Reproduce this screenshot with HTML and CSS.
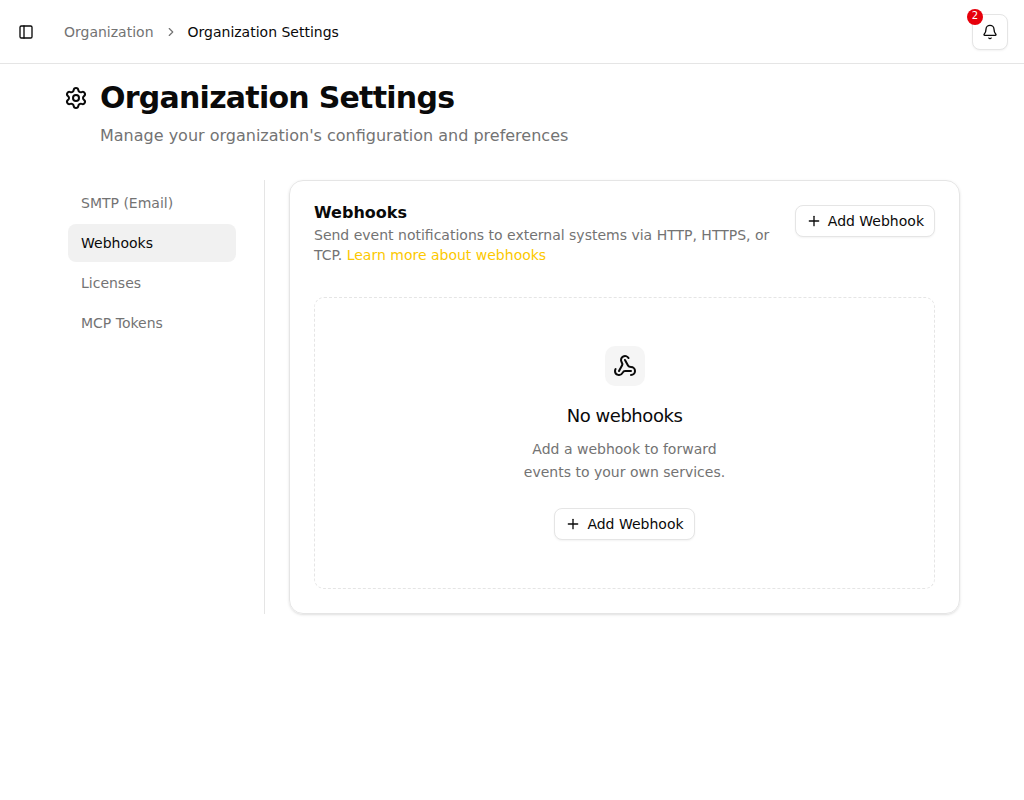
FILE: index.html
```html
<!DOCTYPE html>
<html lang="en">
<head>
<meta charset="utf-8">
<title>Organization Settings</title>
<link rel="stylesheet" href="styles.css">
</head>
<body>
<header class="topbar">
  <button class="sidebar-toggle" aria-label="Toggle sidebar">
    <svg class="icon" viewBox="0 0 24 24"><rect width="18" height="18" x="3" y="3" rx="2"/><path d="M9 3v18"/></svg>
  </button>
  <nav class="breadcrumb">
    <a class="crumb">Organization</a>
    <svg class="icon crumb-sep" viewBox="0 0 24 24"><path d="m9 18 6-6-6-6"/></svg>
    <span class="crumb-current">Organization Settings</span>
  </nav>
  <button class="bell" aria-label="Notifications">
    <svg class="icon" viewBox="0 0 24 24"><path d="M10.268 21a2 2 0 0 0 3.464 0"/><path d="M3.262 15.326A1 1 0 0 0 4 17h16a1 1 0 0 0 .74-1.673C19.41 13.956 18 12.499 18 8A6 6 0 0 0 6 8c0 4.499-1.411 5.956-2.738 7.326"/></svg>
    <span class="badge">2</span>
  </button>
</header>
<main class="page">
  <div class="page-title">
    <svg class="icon icon-lg" viewBox="0 0 24 24"><path d="M9.671 4.136a2.34 2.34 0 0 1 4.659 0 2.34 2.34 0 0 0 3.319 1.915 2.34 2.34 0 0 1 2.33 4.033 2.34 2.34 0 0 0 0 3.831 2.34 2.34 0 0 1-2.33 4.033 2.34 2.34 0 0 0-3.319 1.915 2.34 2.34 0 0 1-4.659 0 2.34 2.34 0 0 0-3.32-1.915 2.34 2.34 0 0 1-2.33-4.033 2.34 2.34 0 0 0 0-3.831A2.34 2.34 0 0 1 6.35 6.051a2.34 2.34 0 0 0 3.319-1.915"/><circle cx="12" cy="12" r="3"/></svg>
    <h1>Organization Settings</h1>
  </div>
  <p class="subtitle">Manage your organization's configuration and preferences</p>
  <div class="layout">
    <nav class="side">
      <a class="side-item">SMTP (Email)</a>
      <a class="side-item active">Webhooks</a>
      <a class="side-item">Licenses</a>
      <a class="side-item">MCP Tokens</a>
    </nav>
    <section class="card">
      <div class="card-header">
        <div class="card-text">
          <h2>Webhooks</h2>
          <p>Send event notifications to external systems via HTTP, HTTPS, or TCP. <a class="link">Learn more about webhooks</a></p>
        </div>
        <button class="btn"><svg class="icon" viewBox="0 0 24 24"><path d="M5 12h14"/><path d="M12 5v14"/></svg>Add Webhook</button>
      </div>
      <div class="empty">
        <div class="empty-icon">
          <svg class="icon icon-lg" viewBox="0 0 24 24"><path d="M18 16.98h-5.99c-1.1 0-1.95.94-2.48 1.9A4 4 0 0 1 2 17c.01-.7.2-1.4.57-2"/><path d="m6 17 3.13-5.78c.53-.97.1-2.18-.5-3.1a4 4 0 1 1 6.89-4.06"/><path d="m12 6 3.13 5.73C15.66 12.7 16.9 13 18 13a4 4 0 0 1 0 8"/></svg>
        </div>
        <h3>No webhooks</h3>
        <p>Add a webhook to forward<br>events to your own services.</p>
        <button class="btn"><svg class="icon" viewBox="0 0 24 24"><path d="M5 12h14"/><path d="M12 5v14"/></svg>Add Webhook</button>
      </div>
    </section>
  </div>
</main>
</body>
</html>
```
FILE: styles.css
```css
* { box-sizing: border-box; margin: 0; padding: 0; }
body {
  background: #fff;
  color: #0a0a0a;
  font: 14px/20px "DejaVu Sans", sans-serif;
}
button { font: inherit; color: inherit; background: #fff; border: 0; }
.icon {
  width: 16px;
  height: 16px;
  flex: none;
  fill: none;
  stroke: currentColor;
  stroke-width: 2;
  stroke-linecap: round;
  stroke-linejoin: round;
}
.icon-lg { width: 24px; height: 24px; }
.topbar {
  height: 64px;
  display: flex;
  align-items: center;
  padding: 0 16px 0 12px;
  border-bottom: 1px solid #e5e5e5;
}
.sidebar-toggle {
  width: 28px;
  height: 28px;
  display: flex;
  align-items: center;
  justify-content: center;
}
.breadcrumb { display: flex; align-items: center; gap: 10px; margin-left: 24px; }
.crumb { color: #737373; }
.crumb-sep { width: 14px; height: 14px; color: #737373; }
.bell {
  position: relative;
  width: 36px;
  height: 36px;
  margin-left: auto;
  display: flex;
  align-items: center;
  justify-content: center;
  border: 1px solid #e5e5e5;
  border-radius: 8px;
  box-shadow: 0 1px 2px rgba(0, 0, 0, .05);
}
.badge {
  position: absolute;
  left: -6px;
  top: -6px;
  width: 16px;
  height: 16px;
  border-radius: 50%;
  background: #e7000b;
  color: #fff;
  font-size: 10px;
  line-height: 13px;
  text-align: center;
}
.page { padding: 16px 64px; }
.page-title { display: flex; align-items: center; gap: 12px; }
h1 { font-size: 30px; line-height: 36px; font-weight: 700; letter-spacing: -.75px; }
.subtitle { margin: 8px 0 0 36px; font-size: 16px; line-height: 24px; color: #737373; }
.layout { display: grid; grid-template-columns: 201px 1fr; gap: 24px; margin-top: 32px; }
.side {
  display: flex;
  flex-direction: column;
  gap: 2px;
  padding: 4px 28px 4px 4px;
  border-right: 1px solid #e5e5e5;
}
.side-item { padding: 9px 13px; border-radius: 8px; color: #737373; }
.side-item.active { background: #f1f1f1; color: #0a0a0a; }
.card {
  height: 434px;
  padding: 24px;
  border: 1px solid #e5e5e5;
  border-radius: 14px;
  box-shadow: 0 1px 3px rgba(0, 0, 0, .1), 0 1px 2px -1px rgba(0, 0, 0, .1);
}
.card-header { display: flex; align-items: flex-start; justify-content: space-between; gap: 16px; }
h2 { font-size: 16px; line-height: 16px; font-weight: 700; }
.card-text p { margin-top: 4px; color: #737373; }
.link { color: #fcc800; }
.btn {
  height: 32px;
  flex: none;
  display: inline-flex;
  align-items: center;
  gap: 6px;
  padding: 0 10px;
  border: 1px solid #e5e5e5;
  border-radius: 8px;
  box-shadow: 0 1px 2px rgba(0, 0, 0, .05);
}
.empty {
  height: 292px;
  margin-top: 32px;
  padding: 48px;
  display: flex;
  flex-direction: column;
  align-items: center;
  text-align: center;
  border: 1px dashed #e5e5e5;
  border-radius: 10px;
}
.empty-icon {
  width: 40px;
  height: 40px;
  display: flex;
  align-items: center;
  justify-content: center;
  border-radius: 10px;
  background: #f5f5f5;
}
h3 { margin-top: 16px; font-size: 18px; line-height: 28px; font-weight: 400; letter-spacing: -.45px; }
.empty p { margin-top: 8px; line-height: 22.75px; color: #737373; }
.empty .btn { margin-top: 24.5px; }
```
